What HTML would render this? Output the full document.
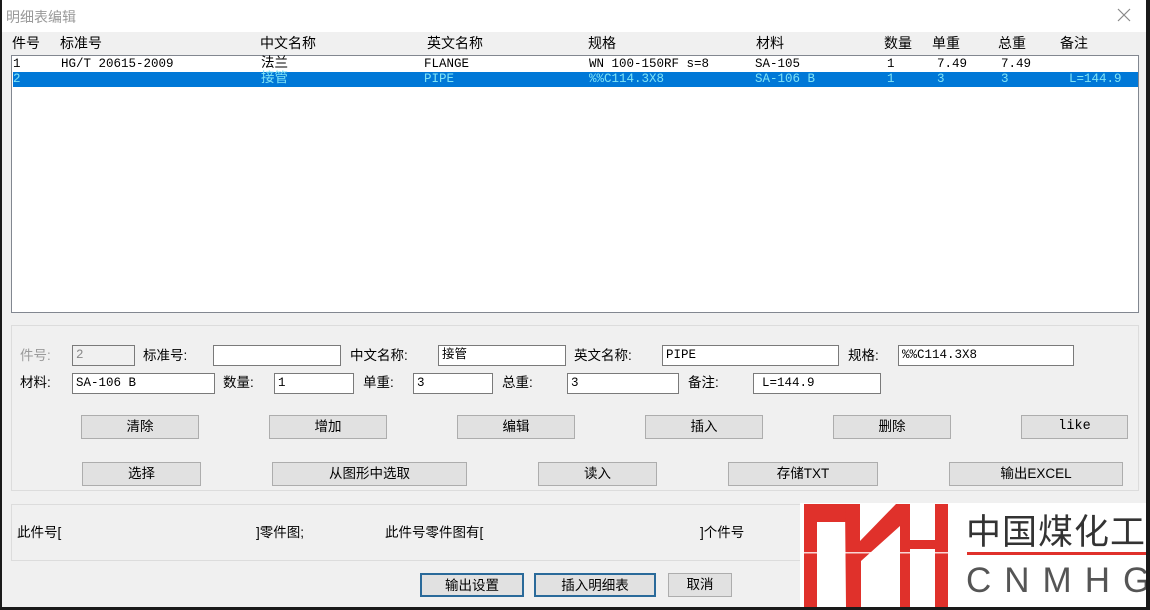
<!DOCTYPE html>
<html><head><meta charset="utf-8"><style>
*{margin:0;padding:0;box-sizing:border-box}
body{width:1150px;height:610px;background:#1a1a1a;position:relative;overflow:hidden;font-family:"Liberation Sans","Noto Sans CJK SC",sans-serif;font-size:13px;color:#000}
.win{position:absolute;left:2px;top:0;width:1144px;height:607px;background:#f0f0f0}
.tb{position:absolute;left:0;top:0;width:1144px;height:32px;background:#fff}
.a{position:absolute;white-space:nowrap}
.m{font-family:"Liberation Mono","Noto Sans CJK SC",monospace;font-size:12.5px}
.list{position:absolute;left:9px;top:55px;width:1128px;height:258px;background:#fff;border:1px solid #828790}
.sel{position:absolute;left:1px;top:16px;width:1125px;height:15px;background:#0078d7}
.grp{position:absolute;border:1px solid #dcdcdc}
.inp{position:absolute;height:21px;background:#fff;border:1px solid #7a7a7a;padding:1px 3px;font-family:"Liberation Mono","Noto Sans CJK SC",monospace;font-size:12.5px;line-height:17px}
.btn{position:absolute;height:24px;background:#e1e1e1;border:1px solid #adadad;text-align:center;line-height:22px;font-size:13.5px}
.lab{position:absolute;font-size:13.5px;line-height:20px}
</style></head><body>
<div class="win">
<div class="tb"><span class="a" style="left:4px;top:7px;color:#999;font-size:14px">明细表编辑</span>
<svg class="a" style="left:1115px;top:8px" width="14" height="14"><path d="M1 1L13 13M13 1L1 13" stroke="#888" stroke-width="1.2"/></svg></div>
<div class="a" style="left:9px;top:33px;font-size:14px;line-height:20px">
<span class="a" style="left:1px">件号</span><span class="a" style="left:49px">标准号</span><span class="a" style="left:249px">中文名称</span><span class="a" style="left:416px">英文名称</span><span class="a" style="left:577px">规格</span><span class="a" style="left:745px">材料</span><span class="a" style="left:873px">数量</span><span class="a" style="left:921px">单重</span><span class="a" style="left:987px">总重</span><span class="a" style="left:1049px">备注</span></div>
<div class="list">
<div class="sel"></div>
<div class="m" style="position:absolute;left:0;top:1px;line-height:15px">
<span class="a" style="left:1px">1</span><span class="a" style="left:49px">HG/T 20615-2009</span><span class="a" style="left:249px;font-size:13.5px">法兰</span><span class="a" style="left:412px">FLANGE</span><span class="a" style="left:577px">WN 100-150RF s=8</span><span class="a" style="left:743px">SA-105</span><span class="a" style="left:875px">1</span><span class="a" style="left:925px">7.49</span><span class="a" style="left:989px">7.49</span></div>
<div class="m" style="position:absolute;left:0;top:16px;line-height:15px;color:#7fe3f5">
<span class="a" style="left:1px">2</span><span class="a" style="left:249px;font-size:13.5px">接管</span><span class="a" style="left:412px">PIPE</span><span class="a" style="left:577px">%%C114.3X8</span><span class="a" style="left:743px">SA-106 B</span><span class="a" style="left:875px">1</span><span class="a" style="left:925px">3</span><span class="a" style="left:989px">3</span><span class="a" style="left:1057px">L=144.9</span></div>
</div>
<div class="grp" style="left:9px;top:325px;width:1128px;height:166px"></div>
<span class="lab" style="left:18px;top:346px;color:#9a9a9a">件号:</span>
<div class="inp" style="left:70px;top:345px;width:63px;background:#f0f0f0;color:#888">2</div>
<span class="lab" style="left:141px;top:346px">标准号:</span>
<div class="inp" style="left:211px;top:345px;width:128px"></div>
<span class="lab" style="left:348px;top:346px">中文名称:</span>
<div class="inp" style="left:436px;top:345px;width:128px">接管</div>
<span class="lab" style="left:572px;top:346px">英文名称:</span>
<div class="inp" style="left:660px;top:345px;width:177px">PIPE</div>
<span class="lab" style="left:846px;top:346px">规格:</span>
<div class="inp" style="left:896px;top:345px;width:176px">%%C114.3X8</div>
<span class="lab" style="left:18px;top:373px">材料:</span>
<div class="inp" style="left:70px;top:373px;width:143px">SA-106 B</div>
<span class="lab" style="left:221px;top:373px">数量:</span>
<div class="inp" style="left:272px;top:373px;width:80px">1</div>
<span class="lab" style="left:361px;top:373px">单重:</span>
<div class="inp" style="left:411px;top:373px;width:80px">3</div>
<span class="lab" style="left:500px;top:373px">总重:</span>
<div class="inp" style="left:565px;top:373px;width:112px">3</div>
<span class="lab" style="left:686px;top:373px">备注:</span>
<div class="inp" style="left:751px;top:373px;width:128px;padding-left:8px">L=144.9</div>
<div class="btn" style="left:79px;top:415px;width:118px">清除</div>
<div class="btn" style="left:267px;top:415px;width:118px">增加</div>
<div class="btn" style="left:455px;top:415px;width:118px">编辑</div>
<div class="btn" style="left:643px;top:415px;width:118px">插入</div>
<div class="btn" style="left:831px;top:415px;width:118px">删除</div>
<div class="btn" style="left:1019px;top:415px;width:107px;font-family:'Liberation Mono',monospace">like</div>
<div class="btn" style="left:80px;top:462px;width:119px">选择</div>
<div class="btn" style="left:270px;top:462px;width:195px">从图形中选取</div>
<div class="btn" style="left:536px;top:462px;width:119px">读入</div>
<div class="btn" style="left:726px;top:462px;width:150px">存储TXT</div>
<div class="btn" style="left:947px;top:462px;width:174px">输出EXCEL</div>
<div class="grp" style="left:9px;top:504px;width:1128px;height:57px"></div>
<span class="lab" style="left:15px;top:523px">此件号[</span>
<span class="lab" style="left:254px;top:523px">]零件图;</span>
<span class="lab" style="left:383px;top:523px">此件号零件图有[</span>
<span class="lab" style="left:698px;top:523px">]个件号</span>
<div class="btn" style="left:418px;top:573px;width:104px;border:2px solid #2a6a9a">输出设置</div>
<div class="btn" style="left:532px;top:573px;width:122px;border:2px solid #2a6a9a">插入明细表</div>
<div class="btn" style="left:666px;top:573px;width:64px">取消</div>
<div style="position:absolute;left:798px;top:503px;width:346px;height:104px;background:#fff;overflow:hidden">
<svg width="346" height="104" style="position:absolute;left:0;top:0">
<g fill="#e0312b">
<rect x="4" y="1" width="13" height="103"/><rect x="4" y="1" width="44" height="18"/>
<polygon points="45,1 60,1 60,38 96,1 110,1 110,14 61,58 61,104 46,104"/>
<rect x="100" y="1" width="10" height="103"/>
<rect x="100" y="37" width="47" height="9"/>
<rect x="135" y="1" width="13" height="103"/>
<rect x="167" y="49" width="180" height="3"/>
</g>
<rect x="0" y="49" width="150" height="1.5" fill="#fff" opacity="0.8"/>
</svg>
<span class="a" style="left:166px;top:1px;font-size:35px;color:#333;letter-spacing:1px;font-family:'Noto Sans CJK SC',sans-serif">中国煤化工</span>
<span class="a" style="left:166px;top:58px;font-size:35px;line-height:40px;color:#555;letter-spacing:13px">CNMHG</span>
</div>
</div>
</body></html>
